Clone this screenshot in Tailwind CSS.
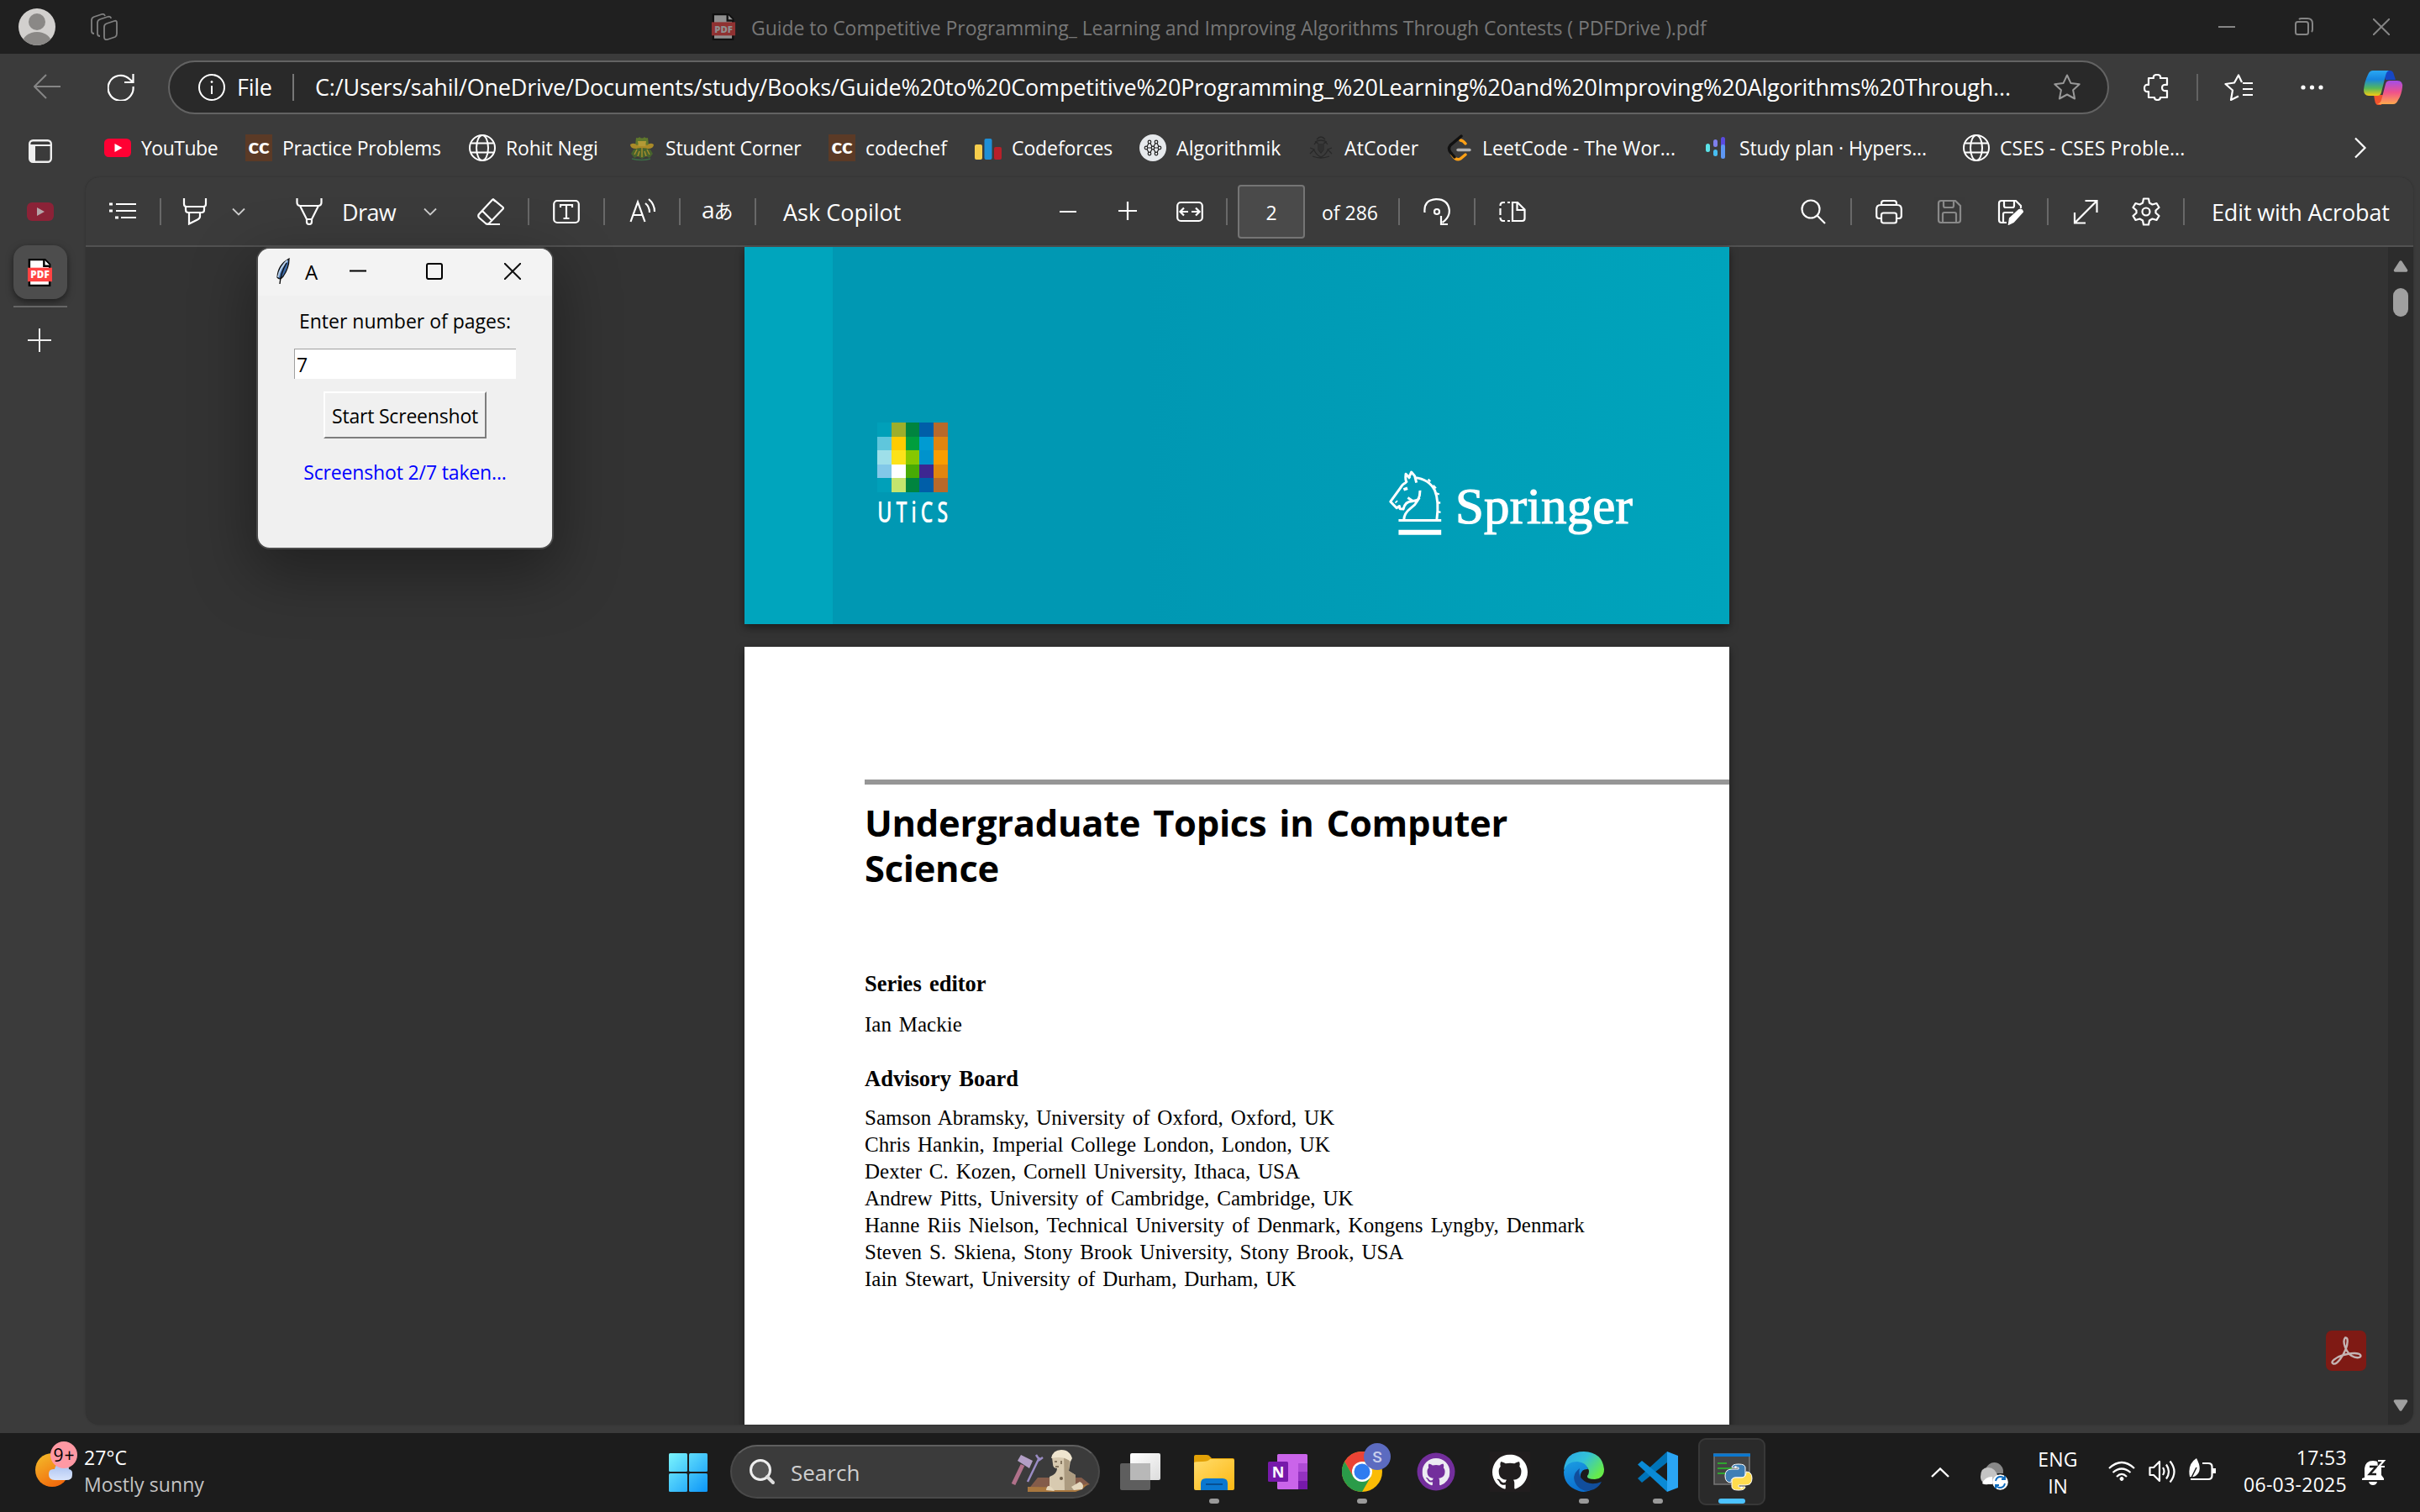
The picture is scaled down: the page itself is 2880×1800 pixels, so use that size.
<!DOCTYPE html>
<html lang="en">
<head>
<meta charset="utf-8">
<title>Guide to Competitive Programming</title>
<script src="https://cdn.jsdelivr.net/npm/@tailwindcss/browser@4"></script>
</head>
<body class="w-[2880px] h-[1800px] overflow-hidden bg-[#3b3b3b] text-white font-['Open_Sans',sans-serif] text-[23px] leading-8 whitespace-nowrap">
<svg class="hidden">
  <symbol id="globe" viewBox="0 0 32 32"><g fill="none" stroke="#fff" stroke-width="2"><circle cx="16" cy="16" r="15"/><ellipse cx="16" cy="16" rx="7" ry="15"/><path d="M2.500 10.500h27M2.500 21.500h27"/></g></symbol>
  <symbol id="pdf" viewBox="0 0 32 34"><path d="M3 1h19l6 6v26H3z" fill="#fff" stroke="#000" stroke-width="2.500"/><path d="M21 1v8h8" fill="#fff" stroke="#000" stroke-width="2.500"/><path d="M1 11h30v17H1z" fill="#ff4343"/><text x="16" y="24" text-anchor="middle" font-family="Open Sans" font-weight="800" font-size="12" fill="#fff" textLength="23">PDF</text></symbol>
  <symbol id="cc" viewBox="0 0 32 32"><path d="M0 0h32v32H0z" fill="#5b3a26"/><text x="16" y="23" text-anchor="middle" font-family="Lato" font-weight="900" font-size="24" fill="#fff" textLength="25" lengthAdjust="spacingAndGlyphs">cc</text></symbol>
  <symbol id="chev" viewBox="0 0 16 10"><path d="M1 1.500l7 7 7-7" fill="none" stroke="#ccc" stroke-width="1.800"/></symbol>
  <symbol id="cat" viewBox="0 0 16 16"><path d="M8 0C3.580 0 0 3.580 0 8c0 3.540 2.290 6.530 5.470 7.590.4.070.55-.17.55-.38 0-.19-.01-.82-.01-1.490-2.010.37-2.530-.49-2.690-.94-.09-.23-.48-.94-.82-1.130-.28-.15-.68-.52-.01-.53.63-.01 1.080.58 1.230.82.72 1.210 1.870.87 2.330.66.07-.52.28-.87.51-1.070-1.780-.2-3.640-.89-3.640-3.950 0-.87.31-1.590.82-2.150-.08-.2-.36-1.020.08-2.120 0 0 .67-.21 2.200.82.64-.18 1.320-.27 2-.27s1.360.09 2 .27c1.530-1.040 2.200-.82 2.200-.82.44 1.100.16 1.920.08 2.120.51.56.82 1.270.82 2.150 0 3.070-1.870 3.750-3.650 3.950.29.25.54.73.54 1.480 0 1.070-.01 1.930-.01 2.200 0 .21.15.46.55.38A8.010 8.010 0 0 0 16 8c0-4.420-3.580-8-8-8z"/></symbol>
</svg>

<!-- window title bar -->
<header class="flex h-16 items-center bg-[#202020] pl-[22px] text-[#777]">
  <svg class="w-[44px] h-[46px]" viewBox="0 0 44 46"><defs><clipPath id="av"><circle cx="22" cy="23" r="22"/></clipPath></defs><circle cx="22" cy="23" r="22" fill="#d2d0ce"/><g clip-path="url(#av)" fill="#8a8886"><circle cx="22" cy="17" r="10"/><ellipse cx="22" cy="42" rx="17" ry="13"/></g></svg>
  <svg class="ml-[42px] w-8 h-8" viewBox="0 0 32 32" fill="none" stroke="#808080" stroke-width="1.800" stroke-linejoin="round"><path d="M19 12l9-3q3-1 3 2v13q0 3-2 4l-9 3q-4 1-4-3V16q0-3 3-4z"/><path d="M11 27q-3 0-3-3V11q0-3 3-4l9-3q4-1 4 2"/><path d="M4 24q-3 0-3-3V8q0-3 3-4l9-3q3-1 4 2"/></svg>
  <svg class="ml-[706px] w-[30px] h-8 opacity-50"><use href="#pdf"/></svg>
  <span class="ml-[18px] w-[1144px] pt-[2px] tracking-[-0.05px]">Guide to Competitive Programming_ Learning and Improving Algorithms Through Contests ( PDFDrive ).pdf</span>
  <svg class="ml-[602px] w-5 h-5" viewBox="0 0 20 20" stroke="#858585" stroke-width="2"><path d="M0 10h20"/></svg>
  <svg class="ml-[71px] w-[22px] h-[22px]" viewBox="0 0 22 22" fill="none" stroke="#858585" stroke-width="2"><rect x="1" y="5" width="15" height="15" rx="2.500"/><path d="M5 2q1-1 3-1h7q6 0 6 6v7q0 2-1 3"/></svg>
  <svg class="ml-[71px] w-5 h-5" viewBox="0 0 20 20" stroke="#858585" stroke-width="2"><path d="M0 0l20 20M20 0L0 20"/></svg>
</header>

<!-- address row -->
<div class="flex h-[72px] items-center pt-2 pl-10">
  <svg class="w-8 h-8" viewBox="0 0 32 32" fill="none" stroke="#858585" stroke-width="2"><path d="M32 15H1M15 1L1 15l14 14"/></svg>
  <svg class="ml-14 w-8 h-8" viewBox="0 0 32 32" fill="none" stroke="#fff" stroke-width="2.200"><path d="M30.500 15A15 15 0 1 1 26 6l4 3.500M30.500 0v10H20"/></svg>
  <div class="ml-10 flex h-16 w-[2310px] items-center rounded-full border-2 border-[#636363] bg-[#292929] pl-[34px] text-[27px] tracking-[-0.19px]">
    <svg class="w-8 h-8" viewBox="0 0 32 32" fill="none" stroke="#fff" stroke-width="2"><circle cx="16" cy="16" r="15"/><path d="M16 14v10"/><circle cx="16" cy="9.500" r="1" fill="#fff" stroke-width="1"/></svg>
    <span class="ml-[14px] w-[56px] tracking-[-0.3px]">File</span>
    <span class="ml-[10px] h-8 w-[2px] bg-[#777]"></span>
    <span class="ml-[25px] w-[2030px]">C:/Users/sahil/OneDrive/Documents/study/Books/Guide%20to%20Competitive%20Programming_%20Learning%20and%20Improving%20Algorithms%20Through...</span>
    <svg class="ml-[39px] w-8 h-8" viewBox="0 0 32 32" fill="none" stroke="#999" stroke-width="2" stroke-linejoin="round"><path d="M16 1.500l4.400 9.400 10.300 1.300-7.600 7 2 10.300L16 24.500l-9.100 5 2-10.300-7.600-7 10.300-1.300z"/></svg>
  </div>
  <svg class="ml-10 w-8 h-8" viewBox="0 0 32 32" fill="none" stroke="#fff" stroke-width="2.200" stroke-linejoin="round"><path d="M7 5h6q-1-4 4-4t4 4h8v8q-6-1-6 3.500t6 3.500v8h-8q0 3-3.500 3T14 28H7v-7q-5 1-5-4t5-4z"/></svg>
  <span class="ml-8 h-8 w-[2px] bg-[#626262]"></span>
  <svg class="ml-[31px] w-[34px] h-8" viewBox="0 0 34 32" fill="none" stroke="#fff" stroke-width="2.200" stroke-linejoin="round"><path d="M17 26.500L8 31l2-11.500L1.500 12l10.500-1.500L17 1.500l4 8.500M22 11h12M22 18h12M22 25h12"/></svg>
  <svg class="ml-[55px] w-8 h-8" viewBox="0 0 32 32" fill="#fff"><circle cx="5" cy="16" r="2.600"/><circle cx="15.500" cy="16" r="2.600"/><circle cx="26" cy="16" r="2.600"/></svg>
  <svg class="ml-[44px] w-12 h-11" viewBox="0 0 48 44"><defs><linearGradient id="cp1" x1="0" y1="0" x2="0" y2="1"><stop offset="0" stop-color="#29a7f2"/><stop offset=".35" stop-color="#1786e0"/><stop offset=".7" stop-color="#55b85a"/><stop offset="1" stop-color="#f5cb13"/></linearGradient><linearGradient id="cp2" x1="0" y1="0" x2="0" y2="1"><stop offset="0" stop-color="#a34ee8"/><stop offset=".5" stop-color="#f0528a"/><stop offset="1" stop-color="#ffa94d"/></linearGradient></defs><path d="M24 2h8q4 0 5 5l2 6H27z" fill="#1647c4"/><path d="M13 31h11l-2 12h-4q-3 0-4-6z" fill="#f0532d"/><path d="M12 2h19q-3 1-4 6l-5 20q-1 4-5 4H7q-6 0-6-7Q2 15 6 7q2-5 6-5z" fill="url(#cp1)"/><path d="M36 42H17q4-1 5-5l5-19q1-4 5-4h9q7 0 6 8-1 9-5 15-2 5-6 5z" fill="url(#cp2)"/></svg>
</div>

<div class="flex h-[1570px]">
  <!-- vertical tabs -->
  <aside class="flex w-[102px] flex-col pl-4">
    <svg class="mt-[30px] ml-[18px] w-7 h-7" viewBox="0 0 28 28"><rect x="1.200" y="1.200" width="25.600" height="25.600" rx="4" fill="none" stroke="#eee" stroke-width="2.400"/><path d="M1 8h7v18H5q-4 0-4-4z" fill="#eee"/><path d="M1 7h26" stroke="#eee" stroke-width="2"/></svg>
    <svg class="mt-[47px] ml-4 w-8 h-[22px]" viewBox="0 0 32 22"><rect width="32" height="22" rx="6" fill="#8b2237"/><path d="M12 6l9 5-9 5z" fill="#b5a3a8"/></svg>
    <div class="mt-[29px] flex size-16 items-center justify-center rounded-2xl bg-[#4d4d4d] shadow-[0_3px_8px_rgba(0,0,0,.5)]"><svg class="mr-[2px] w-[31px] h-[33px]"><use href="#pdf"/></svg></div>
    <span class="mt-2 h-[2px] w-16 bg-[#666]"></span>
    <svg class="mt-[25px] ml-[17px] w-7 h-7" viewBox="0 0 28 28" stroke="#eee" stroke-width="2"><path d="M14 0v28M0 14h28"/></svg>
  </aside>

  <div class="flex w-[2778px] flex-col">
    <!-- bookmarks -->
    <nav class="flex h-[75px] items-center pt-[5px] pl-[22px] [&>div]:flex [&>div]:items-center [&>div]:gap-3 [&_svg]:shrink-0 [&_span]:-mt-[1px] tracking-[-0.1px]">
      <div class="w-[168px]"><svg class="size-8" viewBox="0 0 32 32"><rect y="5" width="32" height="22" rx="5.500" fill="#ff0033"/><path d="M12.500 11l9 5-9 5z" fill="#fff"/></svg><span class="tracking-[-0.5px]">YouTube</span></div>
      <div class="w-[266px]"><svg class="size-8"><use href="#cc"/></svg><span class="tracking-[-0.25px]">Practice Problems</span></div>
      <div class="w-[190px]"><svg class="size-8"><use href="#globe"/></svg><span>Rohit Negi</span></div>
      <div class="w-[238px]"><svg class="size-8" viewBox="0 0 32 32"><path d="M9 4q3 1 4-1 3 3 6 0 1 2 4 1l1 9H8z" fill="#5f772c"/><path d="M2 12q5-3 8 1l6-4 6 4q4-4 8-1 0 5-7 5H9q-7 0-7-5z" fill="#a98a28"/><path d="M11 8h10l-1 6h-8z" fill="#b39a36"/><path d="M6 18q10-4 20 0l3 5-4 5-4-2-5 3-5-3-4 2-4-5z" fill="#47632d"/><path d="M16 16v11M10 18l-3 6M22 18l3 6M13 20l-2 6M19 20l2 6" stroke="#a58c2d" stroke-width="1.500"/><path d="M4 29q12 3 22 0" stroke="#3c6a46" stroke-width="1.500" fill="none"/></svg><span class="tracking-[-0.2px]">Student Corner</span></div>
      <div class="w-[174px]"><svg class="size-8"><use href="#cc"/></svg><span>codechef</span></div>
      <div class="w-[196px]"><svg class="size-8" viewBox="0 0 32 32"><rect y="12" width="9" height="18" rx="2" fill="#f6cd4c"/><rect x="11.500" y="5" width="9" height="25" rx="2" fill="#1f8fd6"/><rect x="23" y="15" width="9" height="15" rx="2" fill="#b8202a"/></svg><span>Codeforces</span></div>
      <div class="w-[200px]"><svg class="size-8" viewBox="0 0 32 32"><circle cx="16" cy="16" r="16" fill="#e6e9ec"/><g fill="none" stroke="#222" stroke-width="1.200"><circle cx="12" cy="9" r="1.800"/><circle cx="20" cy="9" r="1.800"/><circle cx="8" cy="16" r="1.800"/><circle cx="16" cy="16" r="1.800"/><circle cx="24" cy="16" r="1.800"/><circle cx="12" cy="23" r="1.800"/><circle cx="20" cy="23" r="1.800"/><path d="M13 10.500l2 4M19 10.500l-2 4M10 16h4M18 16h4M13 21.500l2-4M19 21.500l-2-4M9 14.500l2-4M23 14.500l-2-4M9 17.500l2 4M23 17.500l-2 4"/></g></svg><span class="tracking-[0.1px]">Algorithmik</span></div>
      <div class="w-[164px]"><svg class="size-8" viewBox="0 0 32 32"><g fill="none" stroke="#262626" stroke-width="1.300" opacity=".85"><path d="M11 6q5-6 10 0M9 9q7-4 14 0M8 12q3-5 5 0v6l3 4 3-4v-6q2-5 5 0M3 16l5 2-5 5M29 16l-5 2 5 5M6 26q10 4 20 0M8 19q3 6 8 8 5-2 8-8M13 14h6"/></g><path d="M12 11h8v7l-4 3-4-3z" fill="#303030"/></svg><span class="tracking-[0.1px]">AtCoder</span></div>
      <div class="w-[306px]"><svg class="size-8" viewBox="0 0 32 32" fill="none" stroke-width="3.400" stroke-linecap="round"><path d="M18 7q3 0 6 4M8 24q5 8 10 5l6-5" stroke="#ffa116"/><path d="M19 2L6 13q-3 4 0 8l5 6" stroke="#111"/><path d="M15 18.500h14" stroke="#b3b3b3"/></svg><span class="tracking-[0.05px]">LeetCode - The Wor...</span></div>
      <div class="w-[310px]"><svg class="size-8" viewBox="0 0 32 32"><rect x="4" y="11" width="5" height="10" rx="2.500" fill="#5be3e8"/><rect x="13" y="6" width="5" height="9" rx="2.500" fill="#7f7fec"/><rect x="13" y="18" width="5" height="8" rx="2.500" fill="#47bdf0"/><rect x="22" y="3" width="5" height="14" rx="2.500" fill="#5a4be0"/><rect x="22" y="12" width="5" height="17" rx="2.500" fill="#5d97f4"/></svg><span>Study plan · Hypers...</span></div>
      <div class="w-[457px]"><svg class="size-8"><use href="#globe"/></svg><span class="tracking-[0.1px]">CSES - CSES Proble...</span></div>
      <svg class="size-8" viewBox="0 0 32 32" fill="none" stroke="#fff" stroke-width="2.200"><path d="M10 4.500L21.500 16 10 27.500"/></svg>
    </nav>

    <!-- PDF viewer -->
    <main class="h-[1485px] w-[2770px] overflow-hidden rounded-2xl bg-[#333] shadow-[0_0_3px_rgba(0,0,0,.2)]">
      <div class="flex h-[83px] items-center border-b-2 border-[#525252] bg-[#3b3b3b] pl-[27px] [&_svg]:shrink-0 [&_svg]:fill-none [&_svg]:stroke-white [&_svg]:stroke-[2.2] [&_i]:h-8 [&_i]:w-[2px] [&_i]:bg-[#686868]">
        <svg class="w-[33px] h-8" viewBox="0 0 33 32"><path d="M9 7h24M9 15h24M15 23h18"/><path d="M1 7h4M1 15h4M8 23h4" stroke-width="3"/></svg>
        <i class="ml-7"></i>
        <svg class="ml-6 size-8" viewBox="0 0 32 32"><path d="M3 0v7q0 3 3 3h20q3 0 3-3V0M5 10v4q0 3 3 3h16q3 0 3-3v-4M9 17v13.500l10-5q3-1.500 3-4V17"/></svg>
        <svg class="ml-7 w-4 h-[10px]"><use href="#chev"/></svg>
        <svg class="ml-[60px] size-8" viewBox="0 0 32 32"><path d="M1.500 0v5q0 4 4 4h21q4 0 4-4V0M5 9l8 16h6l8-16M13 25v3q0 3 3 3t3-3v-3"/></svg>
        <span class="ml-[23px] w-[70px] pt-[2px] text-[27px] tracking-[-0.6px]">Draw</span>
        <svg class="ml-[27px] w-4 h-[10px]"><use href="#chev"/></svg>
        <svg class="ml-12 size-8" viewBox="0 0 32 32"><path d="M19.500 1.700l11 9q1 1 0 2L14 30q-2 1.500-4 0l-8-7q-1.500-2 0-4L18 1.800q.8-.8 1.500 0zM6 15l11 11M11 31h16"/></svg>
        <i class="ml-7"></i>
        <svg class="ml-7 size-8" viewBox="0 0 32 32"><rect x="1.200" y="3" width="29.600" height="26" rx="4"/><path d="M9 11V8h14v3M16 8v16M12.500 24h7"/></svg>
        <i class="ml-7"></i>
        <svg class="ml-[29px] size-8" viewBox="0 0 32 32"><path d="M1.500 28L10 4.500 18.500 28M4.500 20h11M19 6q5 4 5 11M23 1q7 6 7 15"/></svg>
        <i class="ml-[27px]"></i>
        <span class="ml-[25px] -mt-1 w-[38px] text-[28px] leading-8 tracking-[-1px]">a<span class="font-['Noto_Sans_CJK_JP',sans-serif] text-[23px]">あ</span></span>
        <i class="ml-[25px]"></i>
        <span class="ml-8 w-[149px] pt-[2px] text-[27px]">Ask Copilot</span>
        <svg class="ml-[179px] w-[22px] h-8" viewBox="0 0 22 32"><path d="M1 16h20"/></svg>
        <svg class="ml-[49px] w-[22px] h-8" viewBox="0 0 22 32"><path d="M0 15h22M11 4v22"/></svg>
        <svg class="ml-[47px] size-8" viewBox="0 0 32 32"><rect x="1.200" y="5" width="29.600" height="22" rx="4"/><path d="M14 16H5M9 11.500L4.500 16 9 20.500M18 16h9M23 11.500l4.500 4.500-4.500 4.500"/></svg>
        <i class="ml-[27px]"></i>
        <span class="ml-3 flex h-16 w-20 items-center justify-center rounded-[4px] border-2 border-[#757575] bg-[#4a4a4a] pt-[3px]">2</span>
        <span class="ml-5 w-[72px] pt-[2px]">of 286</span>
        <i class="ml-[19px]"></i>
        <svg class="ml-7 size-8" viewBox="0 0 32 32"><path d="M1.500 17Q0 2 15 1.200 29 1 30.800 14q.5 9-8.300 15M21 21v10h8"/><circle cx="16" cy="16" r="3"/></svg>
        <i class="ml-7"></i>
        <svg class="ml-7 size-8" viewBox="0 0 32 32"><path d="M16 5h6l8.500 8.500V24q0 3-3 3H16zM21.500 5v9h9M7 5H5Q1.500 5 1.500 9M1.500 12v8M1.500 23q0 4 3.500 4h2M10 5h3M10 27h3"/></svg>
        <svg class="ml-[326px] size-8" viewBox="0 0 32 32"><circle cx="13" cy="13" r="10.500"/><path d="M20.500 20.500L30 30"/></svg>
        <i class="ml-7"></i>
        <svg class="ml-7 size-8" viewBox="0 0 32 32"><path d="M7 8V6q0-3 3-3h12q3 0 3 3v2M7 24H4q-2.800 0-2.800-3v-8Q1.200 8 6 8h20q4.800 0 4.800 5v8q0 3-2.800 3h-3"/><rect x="7" y="17.500" width="18" height="12" rx="2.500"/></svg>
        <span class="ml-10 opacity-40"><svg class="size-8" viewBox="0 0 32 32"><path d="M3 6q0-3 3-3h17l6 6v17q0 3-3 3H6q-3 0-3-3zM9 3v6q0 2 2 2h8q2 0 2-2V3M8 29V19q0-2 2-2h12q2 0 2 2v10"/></svg></span>
        <svg class="ml-10 size-8" viewBox="0 0 32 32"><path d="M12 29H6q-3 0-3-3V6q0-3 3-3h17l6 6v3M9 3v6q0 2 2 2h8q2 0 2-2V3M8 29V19q0-2 2-2h10"/><path d="M16 24L27 14q3-1 4 2L20 28l-5 2.500z" class="fill-white"/></svg>
        <i class="ml-7"></i>
        <svg class="ml-7 size-8" viewBox="0 0 32 32"><path d="M3 29.500L29.500 3M15.500 3h14v14M3 17v12.500h13"/></svg>
        <svg class="ml-[39px] w-[34px] h-[34px]" viewBox="0 0 34 34"><path d="M14 1.500h6l1 5 3.500 2 5-1.500 3 5-4 3.500v3l4 3.500-3 5-5-1.500-3.500 2-1 5h-6l-1-5-3.500-2-5 1.500-3-5 4-3.500v-3l-4-3.500 3-5 5 1.500 3.500-2z" stroke-linejoin="round"/><circle cx="17" cy="17" r="4.500"/></svg>
        <i class="ml-[27px]"></i>
        <span class="ml-8 pt-[2px] text-[27px] tracking-[-0.15px]">Edit with Acrobat</span>
      </div>

      <div class="flex h-[1402px]">
        <div class="ml-[784px] w-[1172px] [&>section]:shadow-[0_4px_10px_rgba(0,0,0,.45)]">
          <!-- cover -->
          <section class="flex h-[449px] bg-[#00a5bd]">
            <div class="ml-[105px] flex w-[1067px] bg-linear-to-r from-[#0098b3] from-35% to-[#00a4bc]">
              <div class="ml-[53px] mt-[209px] w-[84px]">
                <div class="grid h-[83px] grid-cols-5 grid-rows-5">
                  <b class="bg-[#00a0b9]"></b><b class="bg-[#9dae2b]"></b><b class="bg-[#00843f]"></b><b class="bg-[#005ea8]"></b><b class="bg-[#b8692a]"></b>
                  <b class="bg-[#5fc6dc]"></b><b class="bg-[#ffcb00]"></b><b class="bg-[#009e3d]"></b><b class="bg-[#009bd2]"></b><b class="bg-[#e0850f]"></b>
                  <b class="bg-[#9edfe9]"></b><b class="bg-[#fce219]"></b><b class="bg-[#86c800]"></b><b class="bg-[#0093cc]"></b><b class="bg-[#f99d00]"></b>
                  <b class="bg-[#82c8e8]"></b><b class="bg-white"></b><b class="bg-[#48ab05]"></b><b class="bg-[#3d2791]"></b><b class="bg-[#e0850f]"></b>
                  <b class="bg-[#00a0b9]"></b><b class="bg-[#c5e56e]"></b><b class="bg-[#00843f]"></b><b class="bg-[#005ea8]"></b><b class="bg-[#b8692a]"></b>
                </div>
                <div class="mt-[5px] origin-left scale-x-70 text-[34px] leading-[36px] font-semibold tracking-[6.600px]">UTiCS</div>
              </div>
              <svg class="ml-[524px] mt-[266px] w-[65px] h-[78px]" viewBox="335 60 195 235" fill="none" stroke="#fff" stroke-width="9" stroke-linejoin="round"><path d="M391 238q0-24 24-42 35-25 34-64M447 158q-10 14-25 11l-17-11M424 171q-28-2-35 28l-12-1-2-10-10 7-22-23 36-50q6-12 20-19"/><path d="M402 105q-7-10-4-32l15 16M408 88l10-22 12 14 6 24M430 86q50 4 72 46 16 38 7 104"/><path d="M478 92l8 8M496 114l10 10M508 142l10 4M512 176h10M513 208l10 2" stroke-width="7"/><path d="M390 129l14-5" stroke-width="11"/><path d="M360 176l8-7" stroke-width="5"/><path d="M372 239h153" stroke-width="9"/><path d="M372 282h153" stroke-width="18"/></svg>
              <div class="ml-[15px] mt-[274px] h-[70px] font-['Liberation_Serif',serif] text-[61px] leading-[70px] tracking-[0.100px] [-webkit-text-stroke:1.200px_white]">Springer</div>
            </div>
          </section>
          <!-- title page -->
          <section class="mt-[27px] h-[940px] bg-white pt-[158px] pl-[143px] font-['Liberation_Serif',serif] text-[25px] text-black [word-spacing:2.600px]">
            <div class="h-[6px] bg-[#969696]"></div>
            <h1 class="mt-[19px] font-['Open_Sans',sans-serif] text-[43.500px] leading-[54px] font-bold tracking-[-0.3px] [word-spacing:4px]">Undergraduate Topics in Computer<br>Science</h1>
            <h2 class="mt-[94px] text-[26.500px] font-bold">Series editor</h2>
            <p class="mt-[17px]">Ian Mackie</p>
            <h2 class="mt-8 text-[26.500px] font-bold">Advisory Board</h2>
            <p class="mt-[15px]">Samson Abramsky, University of Oxford, Oxford, UK<br>Chris Hankin, Imperial College London, London, UK<br>Dexter C. Kozen, Cornell University, Ithaca, USA<br>Andrew Pitts, University of Cambridge, Cambridge, UK<br><span class="[word-spacing:2.900px]">Hanne Riis Nielson, Technical University of Denmark, Kongens Lyngby, Denmark</span><br>Steven S. Skiena, Stony Brook University, Stony Brook, USA<br>Iain Stewart, University of Durham, Durham, UK</p>
          </section>
        </div>
        <div class="ml-[784px] flex w-[30px] flex-col bg-[#2c2c2c] pl-[6px]">
          <svg class="mt-4 w-[18px] h-[14px]" viewBox="0 0 18 14"><path d="M9 2l6.500 10h-13z" fill="#a0a0a0" stroke="#a0a0a0" stroke-width="3.500" stroke-linejoin="round"/></svg>
          <span class="mt-[19px] h-[34px] w-[18px] rounded-full bg-[#a0a0a0]"></span>
          <svg class="mt-auto mb-4 w-[18px] h-[14px]" viewBox="0 0 18 14"><path d="M9 12L2.500 2h13z" fill="#a0a0a0" stroke="#a0a0a0" stroke-width="3.500" stroke-linejoin="round"/></svg>
        </div>
      </div>
    </main>
  </div>
</div>

<!-- floating Acrobat button -->
<svg class="absolute left-[2768px] top-[1584px] size-12" viewBox="0 0 48 48"><rect width="48" height="48" rx="7" fill="#7f1a14"/><path d="M23 8.500c4-1 3 8 .5 14S14 41 9 39.500s3-8 12-10.500 18-3 20 0-4 5-10.500 1S19 13 23 8.500z" fill="none" stroke="#c4b4b3" stroke-width="2.400"/></svg>

<!-- script dialog window -->
<div class="absolute left-[305px] top-[294px] flex h-[360px] w-[354px] flex-col items-center overflow-hidden rounded-[16px] border-2 border-[#4a4a4a] bg-[#f0f0f0] text-black">
  <div class="flex h-[56px] w-full items-center bg-[#f3f3f3] pl-[21px] pb-[2px]">
    <svg class="w-[18px] h-8" viewBox="0 0 18 32"><path d="M16 1Q3 8 2 23q3 4 7-1Q16 12 16 1z" fill="#3d6ba8" stroke="#111" stroke-width="1.300"/><path d="M14 3Q5 12 3 23" stroke="#b8d0ea" stroke-width="2" fill="none"/><path d="M13 6Q6 18 5 31" stroke="#111" stroke-width="1.400" fill="none"/></svg>
    <span class="ml-[17px] w-[20px] pt-[2px] text-[24px]">A</span>
    <svg class="ml-[33px] w-5 h-5" viewBox="0 0 20 20" stroke="#000" stroke-width="2"><path d="M0 9.500h20"/></svg>
    <svg class="ml-[71px] w-5 h-5" viewBox="0 0 20 20" fill="none" stroke="#000" stroke-width="2"><rect x="1" y="1" width="18" height="18" rx="2"/></svg>
    <svg class="ml-[73px] w-5 h-5" viewBox="0 0 20 20" stroke="#111" stroke-width="2"><path d="M0 0l20 20M20 0L0 20"/></svg>
  </div>
  <div class="mt-[14px] h-8">Enter number of pages:</div>
  <div class="mt-[17px] h-9 w-[264px] border-t border-l border-[#a0a0a0] bg-white pl-[2px] pt-[2px]">7</div>
  <div class="mt-[15px] flex h-14 w-[194px] items-center justify-center border-2 border-t-white border-l-white border-r-[#7d7d7d] border-b-[#7d7d7d] pt-[2px] tracking-[-0.2px]">Start Screenshot</div>
  <div class="mt-[24px] h-8 tracking-[-0.15px] text-[#0000ff]">Screenshot 2/7 taken...</div>
</div>
<div class="pointer-events-none absolute left-[305px] top-[294px] h-[360px] w-[354px] rounded-[16px] shadow-[0_24px_70px_6px_rgba(0,0,0,.35)]"></div>

<!-- taskbar -->
<footer class="flex h-[94px] items-center bg-[#1c1c1c] pl-10 [&_svg]:shrink-0">
  <svg class="w-[60px] h-[94px]" viewBox="0 0 60 94"><defs><linearGradient id="sun" x1="0" y1="0" x2=".6" y2="1"><stop offset="0" stop-color="#f4bf2b"/><stop offset="1" stop-color="#f26a0c"/></linearGradient><linearGradient id="cl" x1="0" y1="0" x2="0" y2="1"><stop offset="0" stop-color="#a3bdf0"/><stop offset="1" stop-color="#d9e4fb"/></linearGradient></defs><circle cx="22" cy="44" r="20" fill="url(#sun)"/><path d="M25 56q-7 0-7-7t7-6q2-8 9-8t8 8q5 1 4 7 0 6-7 6z" fill="url(#cl)"/><circle cx="36" cy="26" r="16" fill="#ff99a4"/><text x="36" y="34" text-anchor="middle" font-family="Open Sans" font-size="21" fill="#000" textLength="25">9+</text></svg>
  <div class="-mt-1 w-[200px] tracking-[0.1px]"><div>27°C</div><div class="text-[#c4c4c4]">Mostly sunny</div></div>
  <svg class="ml-[496px] w-[46px] h-[46px]" viewBox="0 0 46 46"><defs><linearGradient id="win" gradientUnits="userSpaceOnUse" x1="0" y1="0" x2="46" y2="46"><stop offset="0" stop-color="#7bf5fd"/><stop offset="1" stop-color="#0c95f8"/></linearGradient></defs><g fill="url(#win)"><rect width="22" height="22" rx="1.500"/><rect x="24" width="22" height="22" rx="1.500"/><rect y="24" width="22" height="22" rx="1.500"/><rect x="24" y="24" width="22" height="22" rx="1.500"/></g></svg>
  <div class="ml-[27px] mt-[-2px] flex h-16 w-[440px] items-center rounded-full border-2 border-[#494949] border-t-[#5f5f5f] bg-[#3b3b3b] pl-5">
    <svg class="w-8 h-8" viewBox="0 0 32 32"><circle cx="14" cy="14" r="11.500" fill="#555" stroke="#eee" stroke-width="3"/><path d="M22 22l7 7" stroke="#ddd" stroke-width="4" stroke-linecap="round"/></svg>
    <span class="ml-[18px] w-[90px] pt-[2px] text-[26px] text-[#cfcfcf]">Search</span>
    <svg class="ml-[172px] w-[96px] h-[52px]" viewBox="0 0 96 52"><path d="M32 33h52l10 8-16 7H20z" fill="#845c4a"/><path d="M20 44l58 1 14-5-7 7-8 3H20z" fill="#a8773f"/><path d="M3 41L14 18" stroke="#b0718a" stroke-width="5"/><path d="M12 6l14 7-4 9-14-9z" fill="#b39fc6"/><path d="M20 38L34 9M30 6l4 6 4-3" stroke="#9a8cc4" stroke-width="2.500" fill="none"/><path d="M46 32q9-3 9-10-5 0-5-5l-1-8Q52 0 60 1q11 1 11 12-1 6-2 12l8 5v18H46z" fill="#d8cab0"/><path d="M63 5q9 1 7 8-1 10-1 12l8 5v18H64z" fill="#ac9b80"/><path d="M48 10Q50 0 60 0t13 10l-2 4q-8-7-23-4z" fill="#efe5cf"/><path d="M52 14h3M60 13v4M53 20h4" stroke="#6b5b46" stroke-width="1.500"/><circle cx="60" cy="34" r="2" fill="#6b5b46"/><path d="M42 48q1-8 7-3l3 4zM72 44l10-6q6 3 3 9l-10 1z" fill="#e5d8be"/></svg>
  </div>
  <svg class="ml-6 w-12 h-[94px]" viewBox="0 0 48 94"><defs><linearGradient id="tv" x1="0" y1="0" x2="1" y2="1"><stop offset="0" stop-color="#fff"/><stop offset="1" stop-color="#dcdcdc"/></linearGradient></defs><rect y="36" width="36" height="32" rx="2" fill="#5e5e5e"/><rect x="12" y="24" width="36" height="32" rx="2" fill="url(#tv)"/><path d="M12 36h24v20H12z" fill="#b8b8b8"/></svg>
  <svg class="ml-10 w-12 h-[94px]" viewBox="0 0 48 94"><defs><linearGradient id="fo" x1="0" y1="0" x2="1" y2="1"><stop offset="0" stop-color="#ffdc6b"/><stop offset="1" stop-color="#fdb813"/></linearGradient></defs><path d="M0 28q0-2 2-2h13q3 0 4 2l2 2h25q2 0 2 2v10H0z" fill="#e2a106"/><path d="M0 35q2-1 10-1 7 0 9-3h27q2 0 2 2v33q0 2-2 2H2q-2 0-2-2z" fill="url(#fo)"/><path d="M8 68V60q0-6 6-6h20q6 0 6 6v8z" fill="#0a77cf"/><path d="M14 61h20" stroke="#074f92" stroke-width="2"/><rect x="18" y="78" width="12" height="6" rx="3" fill="#9a9a9a"/></svg>
  <svg class="ml-10 w-12 h-[94px]" viewBox="0 0 48 94"><rect x="11" y="25" width="36" height="42" rx="1.500" fill="#ca64ea"/><path d="M36 36h11v10H36z" fill="#ae4bd5"/><path d="M36 46h11v11H36z" fill="#9332bf"/><path d="M36 57h11v10H36z" fill="#7719aa"/><rect y="34" width="24" height="24" rx="1.500" fill="#7719aa"/><text x="12" y="53" text-anchor="middle" font-family="Open Sans" font-weight="700" font-size="18" fill="#fff">N</text></svg>
  <svg class="ml-10 w-[58px] h-[94px]" viewBox="0 0 58 94"><g transform="translate(0 22)"><circle cx="24" cy="24" r="24" fill="#fbbc05"/><path d="M3.200 12A24 24 0 0 1 44.800 12H24L13.600 30z" fill="#ea4335"/><path d="M3.200 12A24 24 0 0 0 24 48L34.400 30H13.600z" fill="#2a9b49"/><circle cx="24" cy="24" r="12" fill="#fff"/><circle cx="24" cy="24" r="9.500" fill="#2f7cf0"/></g><circle cx="42" cy="28" r="16" fill="#5c6bc0"/><text x="42" y="35" text-anchor="middle" font-family="Roboto" font-weight="500" font-size="19" fill="#c8ceec">S</text><rect x="18" y="78" width="12" height="6" rx="3" fill="#9a9a9a"/></svg>
  <svg class="ml-[30px] w-12 h-[94px]" viewBox="0 0 48 94"><circle cx="24" cy="46" r="22.500" fill="#732e9c"/><use href="#cat" x="7.500" y="30" width="33" height="33" fill="#ecebf2"/></svg>
  <svg class="ml-10 w-12 h-[94px]" viewBox="0 0 48 94"><path d="M0 22h48v48H0z" fill="#211d1e"/><use href="#cat" x="3" y="25.500" width="42" height="42" fill="#fff"/></svg>
  <svg class="ml-10 w-12 h-[94px]" viewBox="0 0 48 94"><defs><linearGradient id="e1" x1="0" y1="0" x2="1" y2=".6"><stop offset="0" stop-color="#2aa5e8"/><stop offset=".5" stop-color="#33c1d8"/><stop offset="1" stop-color="#66eb4a"/></linearGradient><linearGradient id="e2" x1="0" y1="0" x2=".3" y2="1"><stop offset="0" stop-color="#1b9de2"/><stop offset="1" stop-color="#0a6fd0"/></linearGradient></defs><g transform="translate(0 22)"><path d="M0 22Q2 0 24 0q22 1 24 21 0 11-11 12-10 0-9-4 4-5 0-10Q16 5 0 22z" fill="url(#e1)"/><path d="M0 24Q3 12 16 12q11 1 13 9-7-1-9 6-2 15 16 16Q28 50 18 47 0 41 0 24z" fill="url(#e2)"/><path d="M19 20q-12 9-3 21 8 9 20 4 6-3 9-9-15 6-24-4-4-6-2-12z" fill="#114e9c"/></g><rect x="18" y="78" width="12" height="6" rx="3" fill="#9a9a9a"/></svg>
  <svg class="ml-10 w-12 h-[94px]" viewBox="0 0 48 94"><g transform="translate(0 22)"><path d="M0 32L35 0v13L5 37z" fill="#0073b7"/><path d="M5 11L0 15.500 35 48V35z" fill="#0a8ad6"/><path d="M35 0l13 5v38l-13 5z" fill="#2aa5f4"/></g><rect x="18" y="78" width="12" height="6" rx="3" fill="#9a9a9a"/></svg>
  <svg class="ml-6 w-20 h-[94px]" viewBox="0 0 80 94"><rect x="1" y="7" width="78" height="78" rx="8" fill="#2a2a2a" stroke="#383838" stroke-width="2"/><path d="M19 25h42v36H19z" fill="#454545" stroke="#777" stroke-width="1.500"/><path d="M18 24.500h44v3.500H18z" fill="#0b78d0"/><path d="M23 36h11M23 42h17M23 48h13" stroke="#2fa52f" stroke-width="2"/><path d="M39 59q-7 0-7-8t8-8h8v-2h-8q0-4 8-4t8 4v7q0 5-5 5h-7q-5 0-5 6z" fill="#3f7fb5" stroke="#fff" stroke-width="1"/><path d="M57 46q7 0 7 8t-8 8h-8v2h8q0 4-8 4t-8-4v-6q0-5 5-5h7q5 0 5-7z" fill="#ffdc4e" stroke="#fff" stroke-width="1"/><circle cx="44.500" cy="40.500" r="1.300" fill="#fff"/><circle cx="51.500" cy="65" r="1.300" fill="#fff"/><rect x="24" y="78" width="32" height="6" rx="3" fill="#4cc2ff"/></svg>
  <svg class="ml-[197px] w-[22px] h-3" viewBox="0 0 22 12" fill="none" stroke="#fff" stroke-width="2.400"><path d="M1 11L11 1.500 21 11"/></svg>
  <svg class="ml-[37px] w-[33px] h-[94px]" viewBox="0 0 33 94"><path d="M5 44q6-12 16-8 7 4 6 12H14z" fill="#888"/><path d="M0 52q0-11 9-11t12 12q-1 8-9 8-12 0-12-9z" fill="#c4c4c4"/><path d="M2 60q3-8 12-8v9H9q-4 1-7-1z" fill="#fff"/><circle cx="23.500" cy="58.500" r="9.300" fill="#fff"/><path d="M18 57q1-5 6-5 3 0 5 3M29 51v4h-4M29 60q-1 5-6 5-3 0-5-3M18 66v-4h4" fill="none" stroke="#0f6cbd" stroke-width="1.900"/></svg>
  <div class="ml-[30px] w-[58px] text-center"><div class="tracking-[0.3px]">ENG</div><div>IN</div></div>
  <svg class="ml-[31px] w-8 h-[94px]" viewBox="0 0 32 94" fill="none" stroke="#fff" stroke-width="2.200"><path d="M1 42q15-14 30 0M5.500 47q10.500-9 21 0M10 52q6-6 12 0"/><circle cx="16" cy="54.500" r="2" fill="#fff" stroke-width="1"/></svg>
  <svg class="ml-4 w-8 h-[94px]" viewBox="0 0 32 94" fill="none" stroke="#fff" stroke-width="2.200" stroke-linejoin="round"><path d="M1.500 41H6l7-7v23l-7-7H1.500zM17 41q3 4.500 0 9M21 37.500q6 8.500 0 17M25.500 33.500q10 12.500 0 25"/></svg>
  <svg class="ml-4 w-8 h-[94px]" viewBox="0 0 32 94" fill="none" stroke="#fff" stroke-width="2.200"><path d="M1 52Q-2 37 9 30q8 15-1 21-3 2-7 1z" fill="#fff" stroke="none"/><path d="M3 53l6-12" stroke="#1c1c1c" stroke-width="1.500"/><path d="M16 36h7q4.500 0 4.500 4v10.500q0 4.500-4.500 4.500H2"/><path d="M28 42h4v6h-4z" fill="#fff" stroke="none"/></svg>
  <div class="ml-[13px] -mt-1 w-[143px] text-right tracking-[0.3px]"><div>17:53</div><div>06-03-2025</div></div>
  <svg class="ml-[18px] w-[30px] h-[94px]" viewBox="0 0 30 94"><path d="M3 53V42q1-9 10-9t10 9v8l3 4v2H0v-2z" fill="#fff"/><path d="M8 58h10q-1 4-5 4t-5-4z" fill="#fff"/><path d="M9 40h8l-8 9h8" fill="none" stroke="#1c1c1c" stroke-width="2.600"/><path d="M18 30h9v11h-8z" fill="#1c1c1c"/><path d="M19 33h7l-6 7h7" fill="none" stroke="#fff" stroke-width="2.200"/></svg>
</footer>
</body>
</html>
